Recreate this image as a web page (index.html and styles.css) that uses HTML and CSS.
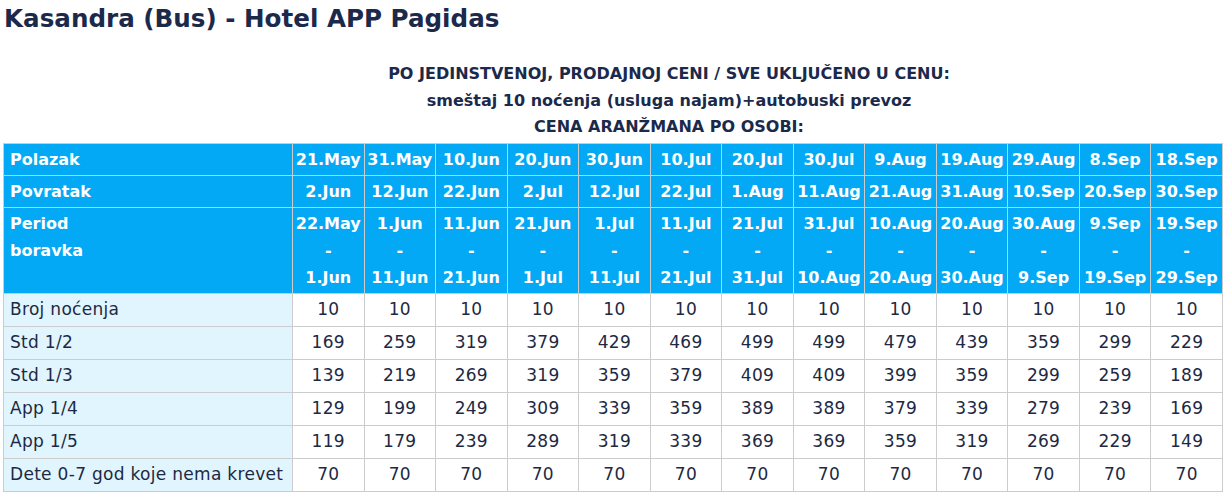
FILE: index.html
```html
<!DOCTYPE html>
<html>
<head>
<meta charset="utf-8">
<link rel="stylesheet" href="styles.css">
</head>
<body>
<h1 class="title">Kasandra (Bus) - Hotel APP Pagidas</h1>
<div class="intro">
  <p>PO JEDINSTVENOJ, PRODAJNOJ CENI / SVE UKLJUČENO U CENU:</p>
  <p>smeštaj 10 noćenja (usluga najam)+autobuski prevoz</p>
  <p>CENA ARANŽMANA PO OSOBI:</p>
</div>
<table class="prices">
  <colgroup>
    <col class="c-label">
    <col><col><col><col><col><col><col><col><col><col><col><col><col>
  </colgroup>
  <thead>
    <tr class="hrow">
      <th class="lbl">Polazak</th>
      <th>21.May</th><th>31.May</th><th>10.Jun</th><th>20.Jun</th><th>30.Jun</th><th>10.Jul</th><th>20.Jul</th><th>30.Jul</th><th>9.Aug</th><th>19.Aug</th><th>29.Aug</th><th>8.Sep</th><th>18.Sep</th>
    </tr>
    <tr class="hrow">
      <th class="lbl">Povratak</th>
      <th>2.Jun</th><th>12.Jun</th><th>22.Jun</th><th>2.Jul</th><th>12.Jul</th><th>22.Jul</th><th>1.Aug</th><th>11.Aug</th><th>21.Aug</th><th>31.Aug</th><th>10.Sep</th><th>20.Sep</th><th>30.Sep</th>
    </tr>
    <tr class="hrow">
      <th class="lbl">Period<br>boravka</th>
      <th>22.May<br>-<br>1.Jun</th><th>1.Jun<br>-<br>11.Jun</th><th>11.Jun<br>-<br>21.Jun</th><th>21.Jun<br>-<br>1.Jul</th><th>1.Jul<br>-<br>11.Jul</th><th>11.Jul<br>-<br>21.Jul</th><th>21.Jul<br>-<br>31.Jul</th><th>31.Jul<br>-<br>10.Aug</th><th>10.Aug<br>-<br>20.Aug</th><th>20.Aug<br>-<br>30.Aug</th><th>30.Aug<br>-<br>9.Sep</th><th>9.Sep<br>-<br>19.Sep</th><th>19.Sep<br>-<br>29.Sep</th>
    </tr>
  </thead>
  <tbody>
    <tr><td class="lbl">Broj noćenja</td><td>10</td><td>10</td><td>10</td><td>10</td><td>10</td><td>10</td><td>10</td><td>10</td><td>10</td><td>10</td><td>10</td><td>10</td><td>10</td></tr>
    <tr><td class="lbl">Std 1/2</td><td>169</td><td>259</td><td>319</td><td>379</td><td>429</td><td>469</td><td>499</td><td>499</td><td>479</td><td>439</td><td>359</td><td>299</td><td>229</td></tr>
    <tr><td class="lbl">Std 1/3</td><td>139</td><td>219</td><td>269</td><td>319</td><td>359</td><td>379</td><td>409</td><td>409</td><td>399</td><td>359</td><td>299</td><td>259</td><td>189</td></tr>
    <tr><td class="lbl">App 1/4</td><td>129</td><td>199</td><td>249</td><td>309</td><td>339</td><td>359</td><td>389</td><td>389</td><td>379</td><td>339</td><td>279</td><td>239</td><td>169</td></tr>
    <tr><td class="lbl">App 1/5</td><td>119</td><td>179</td><td>239</td><td>289</td><td>319</td><td>339</td><td>369</td><td>369</td><td>359</td><td>319</td><td>269</td><td>229</td><td>149</td></tr>
    <tr><td class="lbl">Dete 0-7 god koje nema krevet</td><td>70</td><td>70</td><td>70</td><td>70</td><td>70</td><td>70</td><td>70</td><td>70</td><td>70</td><td>70</td><td>70</td><td>70</td><td>70</td></tr>
  </tbody>
</table>
</body>
</html>
```

FILE: styles.css
```css
html, body {
  margin: 0;
  padding: 0;
  background: #ffffff;
}
body {
  padding: 0 3px;
  font-family: "DejaVu Sans", "Open Sans", sans-serif;
  color: #1d2943;
}
.title {
  margin: 0;
  padding: 2px 0 0 1px;
  font-size: 24.6px;
  line-height: 34px;
  font-weight: 700;
  color: #1b2a4b;
}
.intro {
  margin-top: 25px;
  padding-left: 112px;
  text-align: center;
  font-size: 16px;
  font-weight: 700;
  line-height: 26.5px;
  color: #1b2a4b;
}
.intro p {
  margin: 0;
}
.prices {
  margin-top: 2px;
  border-collapse: collapse;
  table-layout: fixed;
  width: 1220px;
  font-size: 16px;
}
.prices col.c-label {
  width: 289px;
}
.prices th,
.prices td {
  border: 1px solid #cccccc;
  text-align: center;
  vertical-align: middle;
  white-space: nowrap;
  overflow: hidden;
}
.prices th {
  background: #03a9f4;
  color: #ffffff;
  font-weight: 700;
  line-height: 27px;
  padding: 2px 2px;
}
.prices th.lbl {
  text-align: left;
  vertical-align: top;
  padding-left: 6px;
}
.prices td {
  font-size: 17px;
  letter-spacing: 0.3px;
  line-height: 27px;
  padding: 2px 4px 3px;
  color: #1d2943;
}
.prices td.lbl {
  text-align: left;
  background: #e1f5fe;
  padding-left: 6px;
}
```
